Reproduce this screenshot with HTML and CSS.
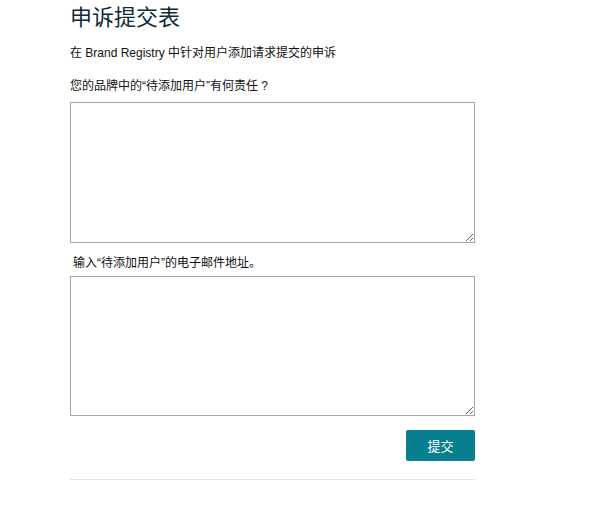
FILE: index.html
```html
<!DOCTYPE html>
<html lang="zh">
<head>
  <meta charset="UTF-8">
  <title>申诉提交表</title>
  <link rel="stylesheet" href="styles.css">
</head>
<body>
  <div class="form-wrap">
    <h1>申诉提交表</h1>
    <p class="intro">在 Brand Registry 中针对用户添加请求提交的申诉</p>

    <label class="field-label" for="role">您的品牌中的“待添加用户”有何责任 ?</label>
    <textarea id="role"></textarea>

    <label class="field-label indent" for="email">输入“待添加用户”的电子邮件地址。</label>
    <textarea id="email"></textarea>

    <div class="actions">
      <button type="button">提交</button>
    </div>
    <hr class="divider">
  </div>
</body>
</html>
```

FILE: styles.css
```css
body {
  margin: 0;
  background: #fff;
  font-family: "Liberation Sans", "Noto Sans CJK SC", sans-serif;
  color: #111;
}

.form-wrap {
  width: 405px;
  padding: 4px 0 0 70px;
}

h1 {
  margin: 0;
  font-size: 22px;
  font-weight: 400;
  line-height: 28px;
  color: #0f2a33;
}

.intro {
  margin: 12px 0 0;
  font-size: 12px;
  line-height: 18px;
}

.field-label {
  display: block;
  margin-top: 15px;
  font-size: 12px;
  line-height: 18px;
}

.field-label.indent {
  margin-top: 11px;
  padding-left: 3px;
}

textarea {
  display: block;
  box-sizing: border-box;
  width: 405px;
  height: 141px;
  margin-top: 7px;
  border: 1px solid #a6a6a6;
  border-radius: 0;
  padding: 4px;
  resize: vertical;
}

#email {
  margin-top: 4px;
  height: 140px;
}

.actions {
  display: flex;
  justify-content: flex-end;
  margin-top: 14px;
}

button {
  width: 69px;
  height: 31px;
  border: none;
  border-radius: 2px;
  background: #077f8f;
  color: #fff;
  font-family: "Liberation Sans", "Noto Sans CJK SC", sans-serif;
  font-size: 13px;
  cursor: pointer;
}

.divider {
  margin: 18px 0 0;
  border: none;
  border-top: 1px solid #e3e3e3;
}
```
